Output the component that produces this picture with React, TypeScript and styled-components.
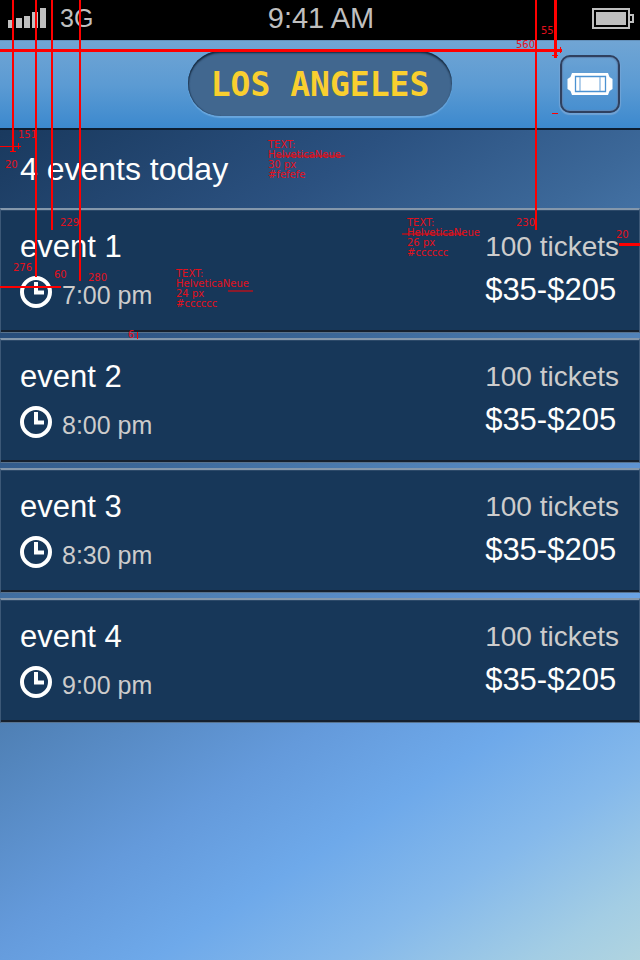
import React from "react";
import styled, { createGlobalStyle } from "styled-components";

const GlobalStyle = createGlobalStyle`
  *, *::before, *::after { box-sizing: border-box; }
  body {
    margin: 0;
    font-family: "Liberation Sans", Arial, sans-serif;
    -webkit-font-smoothing: antialiased;
  }
  h1, h2, h3, p, ul { margin: 0; padding: 0; font-weight: 400; }
`;

const Screen = styled.div`
  position: relative;
  min-height: 100vh;
  overflow: hidden;
  display: flex;
  flex-direction: column;
  color: #fefefe;
  background: linear-gradient(
    147deg,
    #12304f 0%,
    #1a3a5f 10%,
    #2b5180 28%,
    #3c6899 41%,
    #4f80b5 53%,
    #649adb 68%,
    #6ea9ea 77%,
    #85b9eb 86%,
    #a3cde4 95%,
    #b0d4e0 100%
  );
`;

const StatusBar = styled.div`
  display: grid;
  grid-template-columns: 1fr auto 1fr;
  align-items: center;
  height: 40px;
  padding: 0 6px 4px 8px;
  background: #000;
  color: #bfbfbf;
  line-height: 32px;
`;

const Carrier = styled.div`
  display: flex;
  align-items: center;
  gap: 14px;
  font-size: 25px;
`;

const Clock = styled.div`
  font-size: 29px;
`;

const Battery = styled.svg`
  justify-self: end;
`;

const Header = styled.header`
  display: grid;
  grid-template-columns: 1fr auto 1fr;
  align-items: center;
  height: 90px;
  padding: 0 20px 2px;
  background: linear-gradient(#70a5d4, #5c9bd3 50%, #3c89ce);
  border-top: 1px solid #6390ba;
  border-bottom: 2px solid #0d1e31;
`;

const CityPill = styled.h1`
  grid-column: 2;
  display: flex;
  align-items: center;
  justify-content: center;
  min-width: 264px;
  height: 65px;
  padding: 2px 20px 0;
  border-radius: 33px;
  background: #41678f;
  box-shadow: inset 0 2px 2px #14283e, inset 1px 0 1px #2b4b6d, 0 2px 1px #68a6de;
  color: #f9cf2f;
  font: 700 33px/40px "DejaVu Sans Mono", monospace;
`;

const TicketButton = styled.button`
  justify-self: end;
  display: flex;
  align-items: center;
  justify-content: center;
  width: 60px;
  height: 58px;
  padding: 0;
  border: 2px solid #2f405f;
  border-radius: 10px;
  background: linear-gradient(#6aa2d4, #478fd0);
  box-shadow: inset 0 0 1px 1px #5f86b3, 0 1px 1px 1px #71a3d5;
`;

const Summary = styled.h2`
  padding: 19px 20px;
  font-size: 32px;
  line-height: 40px;
`;

const EventList = styled.ul`
  display: flex;
  flex-direction: column;
  gap: 5px;
  list-style: none;
`;

const EventCard = styled.li`
  display: flex;
  justify-content: space-between;
  height: 125px;
  padding: 19px 20px 0 19px;
  background: #173759;
  border: 1px solid #3c5877;
  border-top: 2px solid #8497ab;
  border-bottom: 1px solid #58728d;
  box-shadow: inset 0 1px 0 #2c4969, inset 0 -2px 0 #15202e;
`;

const EventColumn = styled.div`
  display: flex;
  flex-direction: column;
`;

const EventName = styled.h3`
  font-size: 31px;
  line-height: 36px;
`;

const TimeRow = styled.div`
  display: flex;
  align-items: center;
  gap: 10px;
  margin-top: 11px;
`;

const Time = styled.p`
  padding-top: 6px;
  color: #ccc;
  font-size: 25px;
  line-height: 26px;
`;

const Tickets = styled.p`
  color: #ccc;
  font-size: 28px;
  line-height: 36px;
`;

const Price = styled.p`
  padding-top: 7px;
  font-size: 31px;
  line-height: 36px;
`;

/* Redline layer drawn over the layout, placed on a free canvas. */
const Redlines = styled.div`
  position: absolute;
  inset: 0;
  width: 640px;
  pointer-events: none;
`;

const Lines = styled.svg`
  position: absolute;
  left: 0;
  top: 0;
`;

const Note = styled.p<{ $x: number; $y: number }>`
  position: absolute;
  left: ${(p) => p.$x}px;
  top: ${(p) => p.$y}px;
  color: #e3101c;
  font-family: "DejaVu Sans", sans-serif;
  font-size: 10px;
  line-height: 10px;
  white-space: pre;
`;

const events = [
  { name: "event 1", time: "7:00 pm" },
  { name: "event 2", time: "8:00 pm" },
  { name: "event 3", time: "8:30 pm" },
  { name: "event 4", time: "9:00 pm" },
];

const notes = [
  { x: 18, y: 130, text: "151" },
  { x: 5, y: 160, text: "20" },
  { x: 541, y: 26, text: "55" },
  { x: 516, y: 40, text: "560" },
  { x: 60, y: 218, text: "229" },
  { x: 13, y: 263, text: "276" },
  { x: 54, y: 270, text: "60" },
  { x: 88, y: 273, text: "280" },
  { x: 516, y: 218, text: "230" },
  { x: 616, y: 230, text: "20" },
  { x: 128, y: 330, text: "6" },
  { x: 268, y: 140, text: "TEXT:\nHelveticaNeue\n30 px\n#fefefe" },
  { x: 176, y: 269, text: "TEXT:\nHelveticaNeue\n24 px\n#cccccc" },
  { x: 407, y: 218, text: "TEXT:\nHelveticaNeue\n26 px\n#cccccc" },
];

/* x, y, width, height */
const strokes = [
  [12, 0, 2, 151],
  [35, 0, 2, 277],
  [51, 0, 2, 230],
  [79, 0, 2, 281],
  [535, 0, 2, 230],
  [554, 0, 3, 58],
  [0, 49, 562, 3],
  [0, 286, 61, 2],
  [619, 243, 21, 3],
  [0, 146, 21, 1],
  [18, 143, 1, 6],
  [10, 151, 6, 1],
  [560, 47, 1, 6],
  [552, 55, 6, 1],
  [552, 113, 6, 1],
  [137, 332, 1, 7],
];

const faintStrokes = [
  [276, 155, 69, 2],
  [228, 290, 25, 2],
  [402, 233, 62, 2],
];

const ClockIcon = () => (
  <svg width="32" height="32" viewBox="0 0 32 32" aria-hidden="true">
    <circle cx="16" cy="16" r="14" fill="none" stroke="#fff" strokeWidth="4" />
    <path d="M14 6h4v8.5h6v4H14z" fill="#fff" />
  </svg>
);

const TicketIcon = () => (
  <svg width="46" height="22" viewBox="0 0 46 22" aria-hidden="true">
    <path d="M5 0H41L42.5 4L45.5 6V16L42.5 18L41 22H5L3.5 18L0.5 16V6L3.5 4Z" fill="#fff" />
    <path d="M8.5 3.5H38.5V18.5H8.5Z" fill="none" stroke="#4b92d2" strokeWidth="1.3" />
    <path d="M13 4V18M33 4V18" fill="none" stroke="#7fb0de" strokeWidth="1.2" />
  </svg>
);

export default function App() {
  return (
    <>
      <GlobalStyle />
      <Screen>
        <StatusBar>
          <Carrier>
            <svg width="38" height="20" viewBox="0 0 38 20" fill="#bfbfbf" aria-hidden="true">
              <path d="M0 12h4v8H0zM8 10h6v10H8zM16 8h6v12h-6zM24 4h6v16h-6zM32 0h6v20h-6z" />
            </svg>
            <span>3G</span>
          </Carrier>
          <Clock>9:41 AM</Clock>
          <Battery width="42" height="21" viewBox="0 0 42 21" aria-hidden="true">
            <path d="M1 1H37V20H1Z" fill="none" stroke="#bfbfbf" strokeWidth="2" />
            <path d="M4 4H34V17H4Z" fill="#bfbfbf" />
            <path d="M38 7h3v7h-3" fill="none" stroke="#bfbfbf" strokeWidth="2" />
          </Battery>
        </StatusBar>
        <Header>
          <CityPill>LOS ANGELES</CityPill>
          <TicketButton type="button" aria-label="Tickets">
            <TicketIcon />
          </TicketButton>
        </Header>
        <Summary>4 events today</Summary>
        <EventList>
          {events.map((event) => (
            <EventCard key={event.name}>
              <EventColumn>
                <EventName>{event.name}</EventName>
                <TimeRow>
                  <ClockIcon />
                  <Time>{event.time}</Time>
                </TimeRow>
              </EventColumn>
              <EventColumn>
                <Tickets>100 tickets</Tickets>
                <Price>$35-$205</Price>
              </EventColumn>
            </EventCard>
          ))}
        </EventList>
        <Redlines>
          <Lines width="640" height="350" viewBox="0 0 640 350" shapeRendering="crispEdges" aria-hidden="true">
            {strokes.map(([x, y, width, height]) => (
              <rect key={`${x}-${y}`} x={x} y={y} width={width} height={height} fill="#f00" />
            ))}
            {faintStrokes.map(([x, y, width, height]) => (
              <rect key={`${x}-${y}`} x={x} y={y} width={width} height={height} fill="#f00" opacity="0.5" />
            ))}
          </Lines>
          {notes.map((note) => (
            <Note key={`${note.x}-${note.y}`} $x={note.x} $y={note.y}>
              {note.text}
            </Note>
          ))}
        </Redlines>
      </Screen>
    </>
  );
}
